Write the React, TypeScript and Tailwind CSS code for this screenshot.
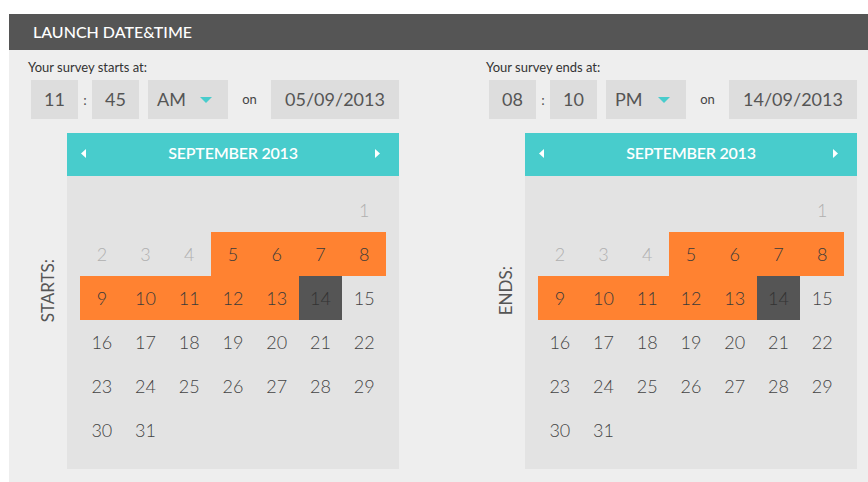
import React from "react";

type Side = {
  label: string;
  side: string;
  hour: string;
  minute: string;
  ampm: string;
  date: string;
};

const sides: Side[] = [
  { label: "Your survey starts at:", side: "STARTS:", hour: "11", minute: "45", ampm: "AM", date: "05/09/2013" },
  { label: "Your survey ends at:", side: "ENDS:", hour: "08", minute: "10", ampm: "PM", date: "14/09/2013" },
];

// sept 2013 starts on the 7th column
const cells: (number | null)[] = [
  ...Array(6).fill(null),
  ...Array.from({ length: 31 }, (_, i) => i + 1),
];

function dayStyle(d: number) {
  if (d <= 4) return "text-[#b0b0b0]";
  if (d <= 13) return "bg-[#ff8231] text-[#3a3a3a]";
  if (d === 14) return "bg-[#555555] text-[#333]";
  return "text-[#444]";
}

function Calendar() {
  return (
    <div className="w-[332px]">
      <div className="flex h-[43px] items-center bg-[#48cccc] pb-[3px] pl-[14px] pr-[19px] text-white">
        <svg width="5" height="9" viewBox="0 0 5 9">
          <path d="M5 0 L0 4.5 L5 9 Z" fill="#fff" />
        </svg>
        <span className="flex-1 pl-[5px] text-center text-[16px] font-semibold tracking-[-0.2px]">
          SEPTEMBER 2013
        </span>
        <svg width="5" height="9" viewBox="0 0 5 9">
          <path d="M0 0 L5 4.5 L0 9 Z" fill="#fff" />
        </svg>
      </div>
      <div className="grid grid-cols-7 bg-[#e3e3e3] px-[13px] pb-[17px] pt-[12px]">
        {cells.map((d, i) =>
          d === null ? (
            <div key={i} className="h-[44px]" />
          ) : (
            <div
              key={i}
              className={`flex h-[44px] items-center justify-center text-[18px] font-light ${dayStyle(d)}`}
            >
              {d}
            </div>
          )
        )}
      </div>
    </div>
  );
}

function Column({ s }: { s: Side }) {
  const box = "flex h-[39px] items-center justify-center bg-[#dddddd] text-[18px] text-[#555]";
  return (
    <div className="w-[458px] shrink-0 pt-[9px]">
      <p className="h-[16px] text-[13px] leading-[16px] text-[#333]">{s.label}</p>
      <div className="ml-[3px] mt-[5px] flex h-[39px] items-center">
        <div className={`${box} w-[47px]`}>{s.hour}</div>
        <span className="w-[14px] text-center text-[14px] text-[#555]">:</span>
        <div className={`${box} w-[47px]`}>{s.minute}</div>
        <div className={`${box} ml-[9px] w-[80px] justify-start pl-[9px]`}>
          <span className="w-[43px]">{s.ampm}</span>
          <svg width="12" height="6" viewBox="0 0 12 6">
            <path d="M0 0 L12 0 L6 6 Z" fill="#48cccc" />
          </svg>
        </div>
        <span className="w-[43px] text-center text-[13px] text-[#444]">on</span>
        <div className={`${box} w-[128px]`}>{s.date}</div>
      </div>
      <div className="mt-[14px] flex items-center">
        <div className="mb-[20px] flex w-[39px] justify-center">
          <span className="rotate-180 text-[17px] text-[#555] [writing-mode:vertical-rl]">
            {s.side}
          </span>
        </div>
        <Calendar />
      </div>
    </div>
  );
}

export default function App() {
  return (
    <div className="h-[482px] overflow-hidden bg-white pl-[9px] pt-[14px] font-['Lato','Open_Sans',sans-serif]">
      <div className="flex h-[36px] items-center bg-[#555555] pl-[24px] text-[16px] font-medium text-white">
        LAUNCH DATE&amp;TIME
      </div>
      <div className="flex h-[432px] overflow-hidden bg-[#eeeeee] pl-[19px]">
        {sides.map((s) => (
          <Column key={s.side} s={s} />
        ))}
      </div>
    </div>
  );
}
